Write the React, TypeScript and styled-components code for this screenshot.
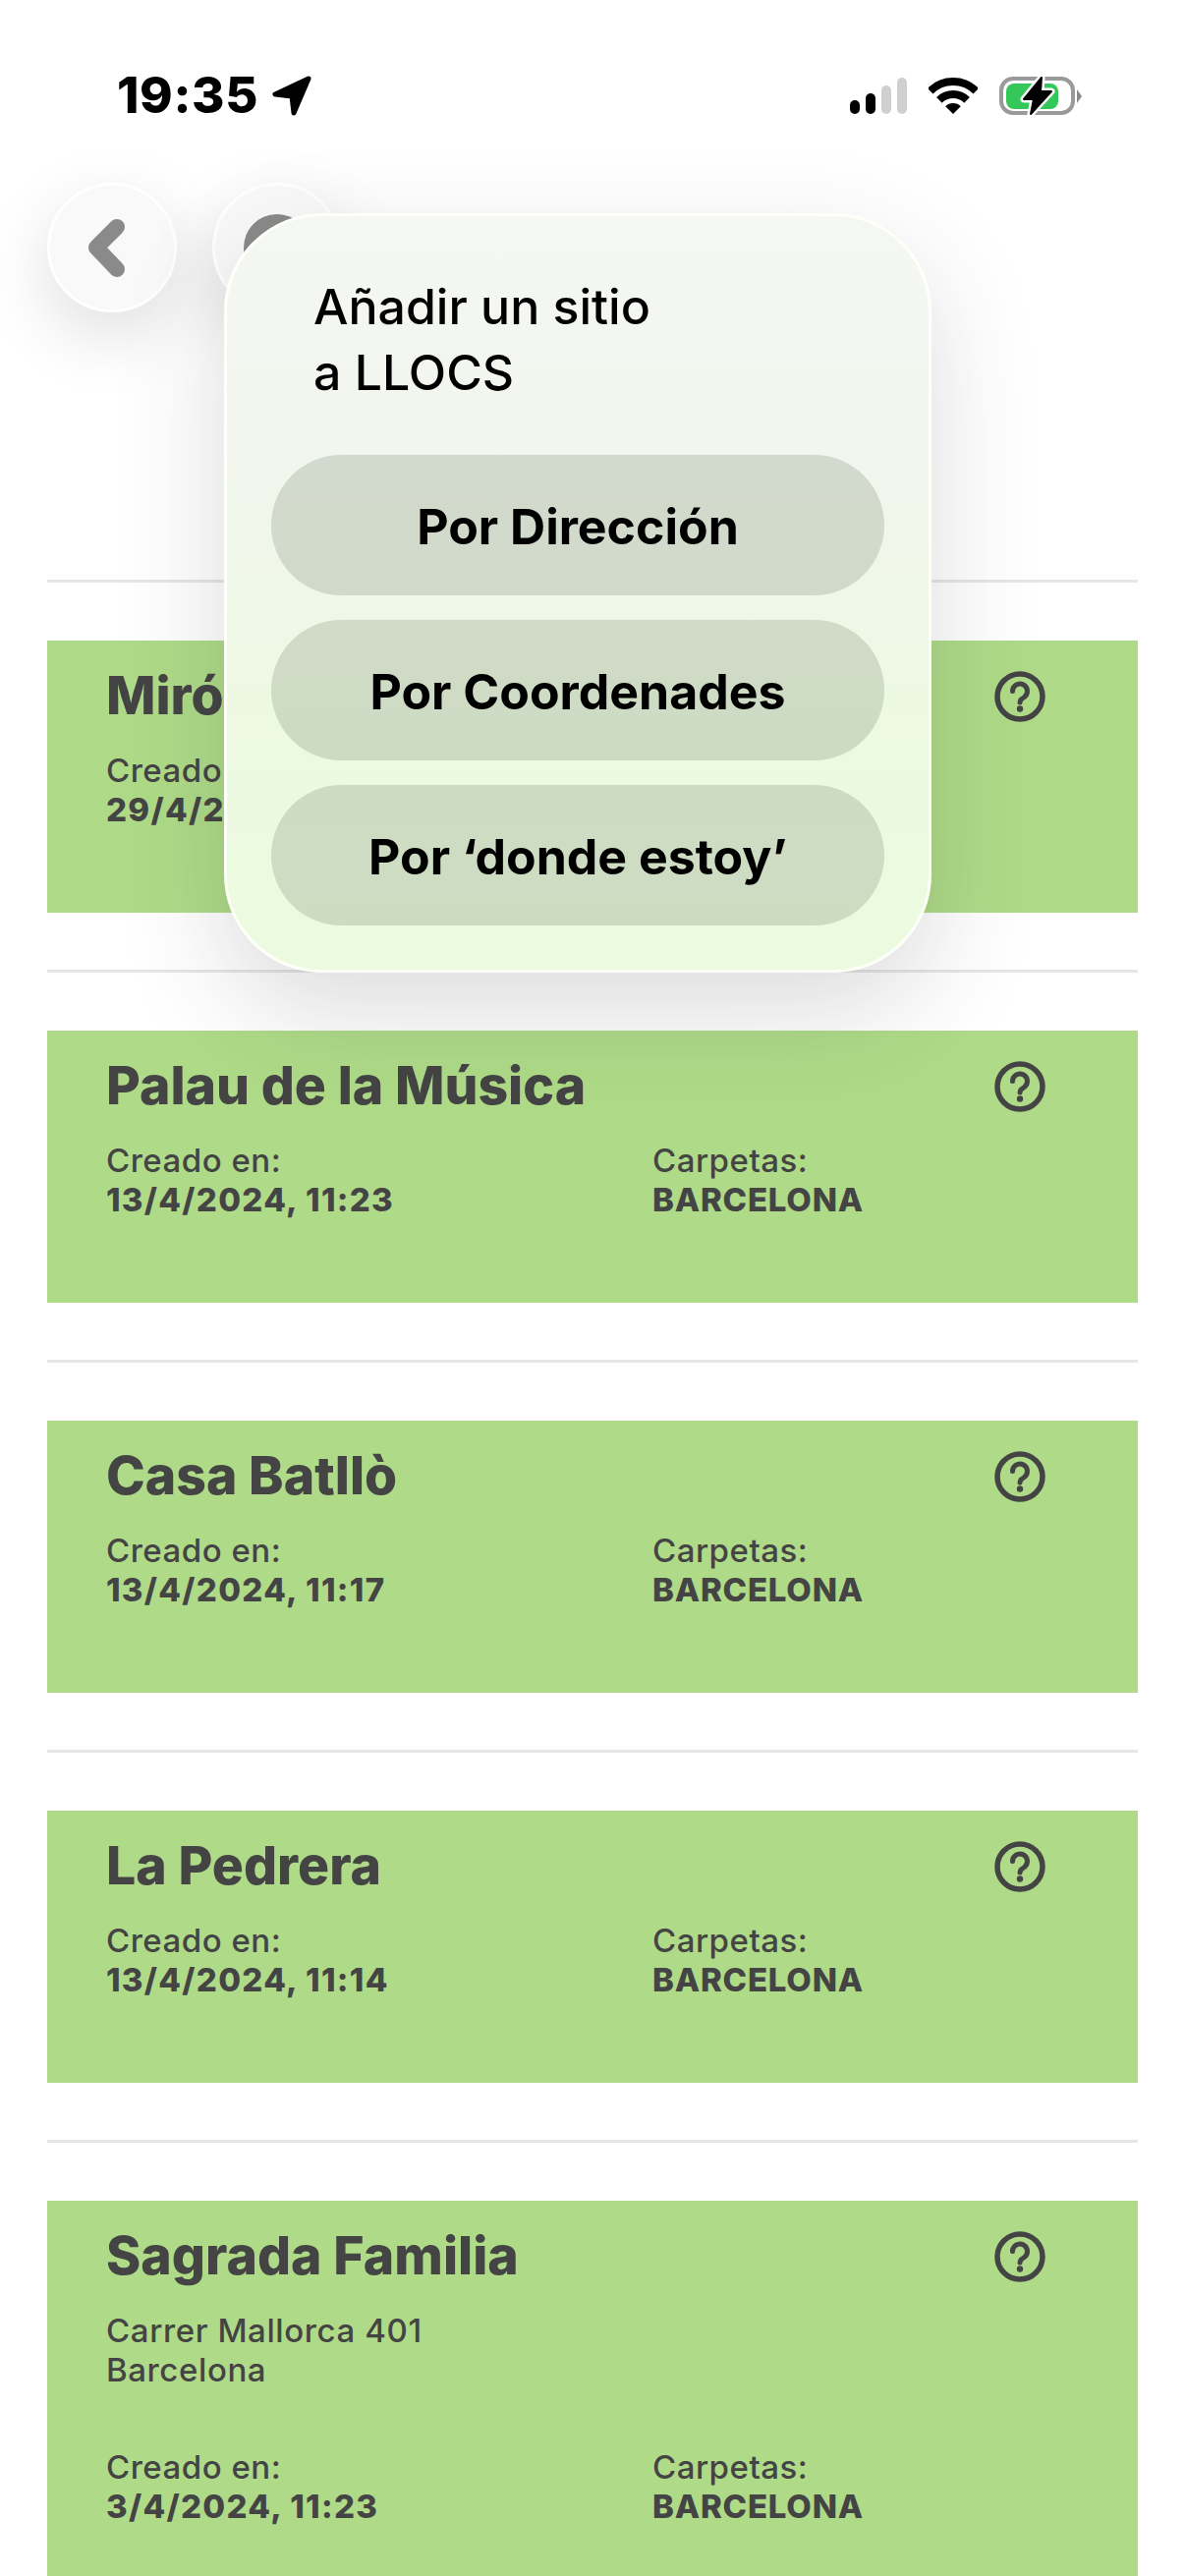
import React from 'react'
import styled, { createGlobalStyle } from 'styled-components'

type Place = {
  name: string
  date: string
  folder: string
  address?: string[]
}

const places: Place[] = [
  { name: 'Miró', date: '29/4/2024', folder: 'BARCELONA' },
  { name: 'Palau de la Música', date: '13/4/2024, 11:23', folder: 'BARCELONA' },
  { name: 'Casa Batllò', date: '13/4/2024, 11:17', folder: 'BARCELONA' },
  { name: 'La Pedrera', date: '13/4/2024, 11:14', folder: 'BARCELONA' },
  {
    name: 'Sagrada Familia',
    date: '3/4/2024, 11:23',
    folder: 'BARCELONA',
    address: ['Carrer Mallorca 401', 'Barcelona'],
  },
]

const GlobalStyle = createGlobalStyle`
  html, body {
    margin: 0;
    padding: 0;
    background: #fff;
  }
  body {
    font-family: Inter, "Liberation Sans", sans-serif;
    -webkit-font-smoothing: antialiased;
  }
`

const Page = styled.div`
  position: relative;
  width: 1206px;
  height: 2622px;
  overflow: hidden;
  background: #fff;
`

const StatusBar = styled.div`
  display: flex;
  justify-content: space-between;
  align-items: flex-start;
  height: 186px;
  padding: 70px 105px 0 119px;
  box-sizing: border-box;
`

const TimeGroup = styled.div`
  display: flex;
  align-items: center;
  gap: 13px;
`

const Time = styled.span`
  font-size: 51px;
  line-height: 54px;
  font-weight: 800;
  color: #000;
  letter-spacing: 0.6px;
`

const StatusIcons = styled.div`
  display: flex;
  align-items: flex-end;
  gap: 22px;
  padding-top: 7px;
`

const SignalBars = styled.div`
  display: flex;
  align-items: flex-end;
  gap: 6px;
  margin-bottom: 3px;
`

const SignalBar = styled.span<{ $height: number; $on: boolean }>`
  width: 10px;
  height: ${p => p.$height}px;
  border-radius: 5px;
  background: ${p => (p.$on ? '#000' : '#cfcfcf')};
`

const WifiIcon = styled.svg`
  margin-bottom: 3px;
`

const Header = styled.div`
  display: flex;
  gap: 36px;
  padding: 0 48px;
  height: 132px;
`

const RoundButton = styled.button`
  display: flex;
  align-items: center;
  justify-content: center;
  width: 132px;
  height: 132px;
  padding: 0;
  border: 3px solid #fff;
  border-radius: 50%;
  background: #f9f9f9;
  box-shadow: 0 24px 70px rgba(0, 0, 0, 0.13);
  box-sizing: border-box;
`

const List = styled.div`
  margin-top: 272px;
  padding: 0 48px;
`

const Row = styled.div`
  height: 397px;
`

const Divider = styled.div`
  height: 3px;
  background: #e6e6e6;
  margin-bottom: 59px;
`

const Card = styled.div`
  display: flex;
  flex-direction: column;
  min-height: 277px;
  padding: 20px 0 85px 60px;
  box-sizing: border-box;
  background: #afdb88;
  color: #444;
`

const CardHead = styled.div`
  display: flex;
  justify-content: space-between;
  align-items: flex-start;
  padding-right: 94px;
`

const CardTitle = styled.h2`
  margin: 0;
  font-size: 53.5px;
  line-height: 72px;
  font-weight: 800;
`

const HelpIcon = styled.svg`
  margin-top: 11px;
  flex: none;
`

const Address = styled.div`
  margin-top: 20px;
  margin-bottom: 39px;
  font-size: 33px;
  line-height: 40px;
  font-weight: 500;
  letter-spacing: 0.6px;
`

const Meta = styled.div`
  display: grid;
  grid-template-columns: 556px 1fr;
  margin-top: 20px;
`

const MetaLabel = styled.div`
  font-size: 33px;
  line-height: 40px;
  font-weight: 500;
  letter-spacing: 0.5px;
`

const MetaValue = styled.div<{ $spacing: number }>`
  font-size: 33px;
  line-height: 40px;
  font-weight: 800;
  letter-spacing: ${p => p.$spacing}px;
`

const Sheet = styled.div`
  position: absolute;
  top: 217px;
  left: 228px;
  width: 720px;
  height: 773px;
  padding: 59px 45px 0;
  box-sizing: border-box;
  border: 3px solid #fdfff8;
  border-radius: 100px;
  background: linear-gradient(180deg, #f5f7f3 0%, #f2f6ee 32%, #edf9e2 68%, #ecfbdf 100%);
  box-shadow: 0 40px 110px rgba(40, 50, 40, 0.17);
`

const SheetTitle = styled.div`
  padding-left: 43px;
  margin-bottom: 50px;
  font-size: 50px;
  line-height: 67px;
  font-weight: 500;
  color: #000;
`

const SheetActions = styled.div`
  display: flex;
  flex-direction: column;
  gap: 25px;
`

const SheetButton = styled.button`
  height: 143px;
  padding: 2px 0 0;
  border: none;
  border-radius: 72px;
  background: rgba(20, 45, 15, 0.14);
  font-family: inherit;
  font-size: 50px;
  font-weight: 650;
  color: #000;
`

function LocationArrow() {
  return (
    <svg width="42" height="43" viewBox="0 0 42 43">
      <path d="M38 4 L4 20 L21 22 L23 39 Z" fill="#000" stroke="#000" strokeWidth="5" strokeLinejoin="round" />
    </svg>
  )
}

function Wifi() {
  return (
    <WifiIcon width="50" height="37" viewBox="0 0 50 37">
      <path d="M1.7 13.7 A33 33 0 0 1 48.3 13.7" fill="none" stroke="#000" strokeWidth="8" />
      <path d="M10.9 22.9 A20 20 0 0 1 39.1 22.9" fill="none" stroke="#000" strokeWidth="8" />
      <path d="M25 37 L17.2 29.2 A11 11 0 0 1 32.8 29.2 Z" fill="#000" />
    </WifiIcon>
  )
}

function Battery() {
  const bolt = 'M43 2 L25 24 L35 24 L32 39 L53 16 L42 16 Z'
  return (
    <svg width="84" height="42" viewBox="0 0 84 42">
      <rect x="2" y="3" width="73" height="35" rx="12" fill="none" stroke="#9a9a9a" strokeWidth="4" />
      <rect x="7" y="8" width="53" height="26" rx="8" fill="#34c759" />
      <path d="M79 14 L84 21 L79 28 Z" fill="#888" />
      <path d={bolt} fill="#fff" stroke="#fff" strokeWidth="7" strokeLinejoin="round" />
      <path d={bolt} fill="#000" stroke="#000" strokeWidth="2" strokeLinejoin="round" />
    </svg>
  )
}

function Help() {
  return (
    <HelpIcon width="52" height="52" viewBox="0 0 52 52">
      <circle cx="26" cy="26" r="23" fill="none" stroke="#444" strokeWidth="5.5" />
      <path
        d="M18.5 20.5 A7.5 7.5 0 1 1 30.5 26.5 C27.5 28.5 26 29.5 26 32"
        fill="none"
        stroke="#444"
        strokeWidth="5"
        strokeLinecap="round"
      />
      <circle cx="26" cy="38.5" r="3.2" fill="#444" />
    </HelpIcon>
  )
}

function PlaceRow({ place }: { place: Place }) {
  return (
    <Row>
      <Divider />
      <Card>
        <CardHead>
          <CardTitle>{place.name}</CardTitle>
          <Help />
        </CardHead>
        {place.address && (
          <Address>
            {place.address.map(line => (
              <div key={line}>{line}</div>
            ))}
          </Address>
        )}
        <Meta>
          <MetaLabel>Creado en:</MetaLabel>
          <MetaLabel>Carpetas:</MetaLabel>
          <MetaValue $spacing={1.3}>{place.date}</MetaValue>
          <MetaValue $spacing={0.8}>{place.folder}</MetaValue>
        </Meta>
      </Card>
    </Row>
  )
}

export default function App() {
  return (
    <Page>
      <GlobalStyle />
      <StatusBar>
        <TimeGroup>
          <Time>19:35</Time>
          <LocationArrow />
        </TimeGroup>
        <StatusIcons>
          <SignalBars>
            <SignalBar $height={14} $on />
            <SignalBar $height={21} $on />
            <SignalBar $height={29} $on={false} />
            <SignalBar $height={37} $on={false} />
          </SignalBars>
          <Wifi />
          <Battery />
        </StatusIcons>
      </StatusBar>
      <Header>
        <RoundButton aria-label="Volver">
          <svg width="50" height="70" viewBox="0 0 50 70">
            <path d="M30 14 L9 35 L30 57" fill="none" stroke="#8a8a8a" strokeWidth="16" strokeLinecap="round" strokeLinejoin="round" />
          </svg>
        </RoundButton>
        <RoundButton aria-label="Añadir">
          <svg width="72" height="72" viewBox="0 0 72 72">
            <circle cx="36" cy="36" r="34" fill="#8a8a8a" />
          </svg>
        </RoundButton>
      </Header>
      <List>
        {places.map(place => (
          <PlaceRow key={place.name} place={place} />
        ))}
      </List>
      <Sheet>
        <SheetTitle>
          Añadir un sitio
          <br />a LLOCS
        </SheetTitle>
        <SheetActions>
          <SheetButton>Por Dirección</SheetButton>
          <SheetButton>Por Coordenades</SheetButton>
          <SheetButton>Por ‘donde estoy’</SheetButton>
        </SheetActions>
      </Sheet>
    </Page>
  )
}
